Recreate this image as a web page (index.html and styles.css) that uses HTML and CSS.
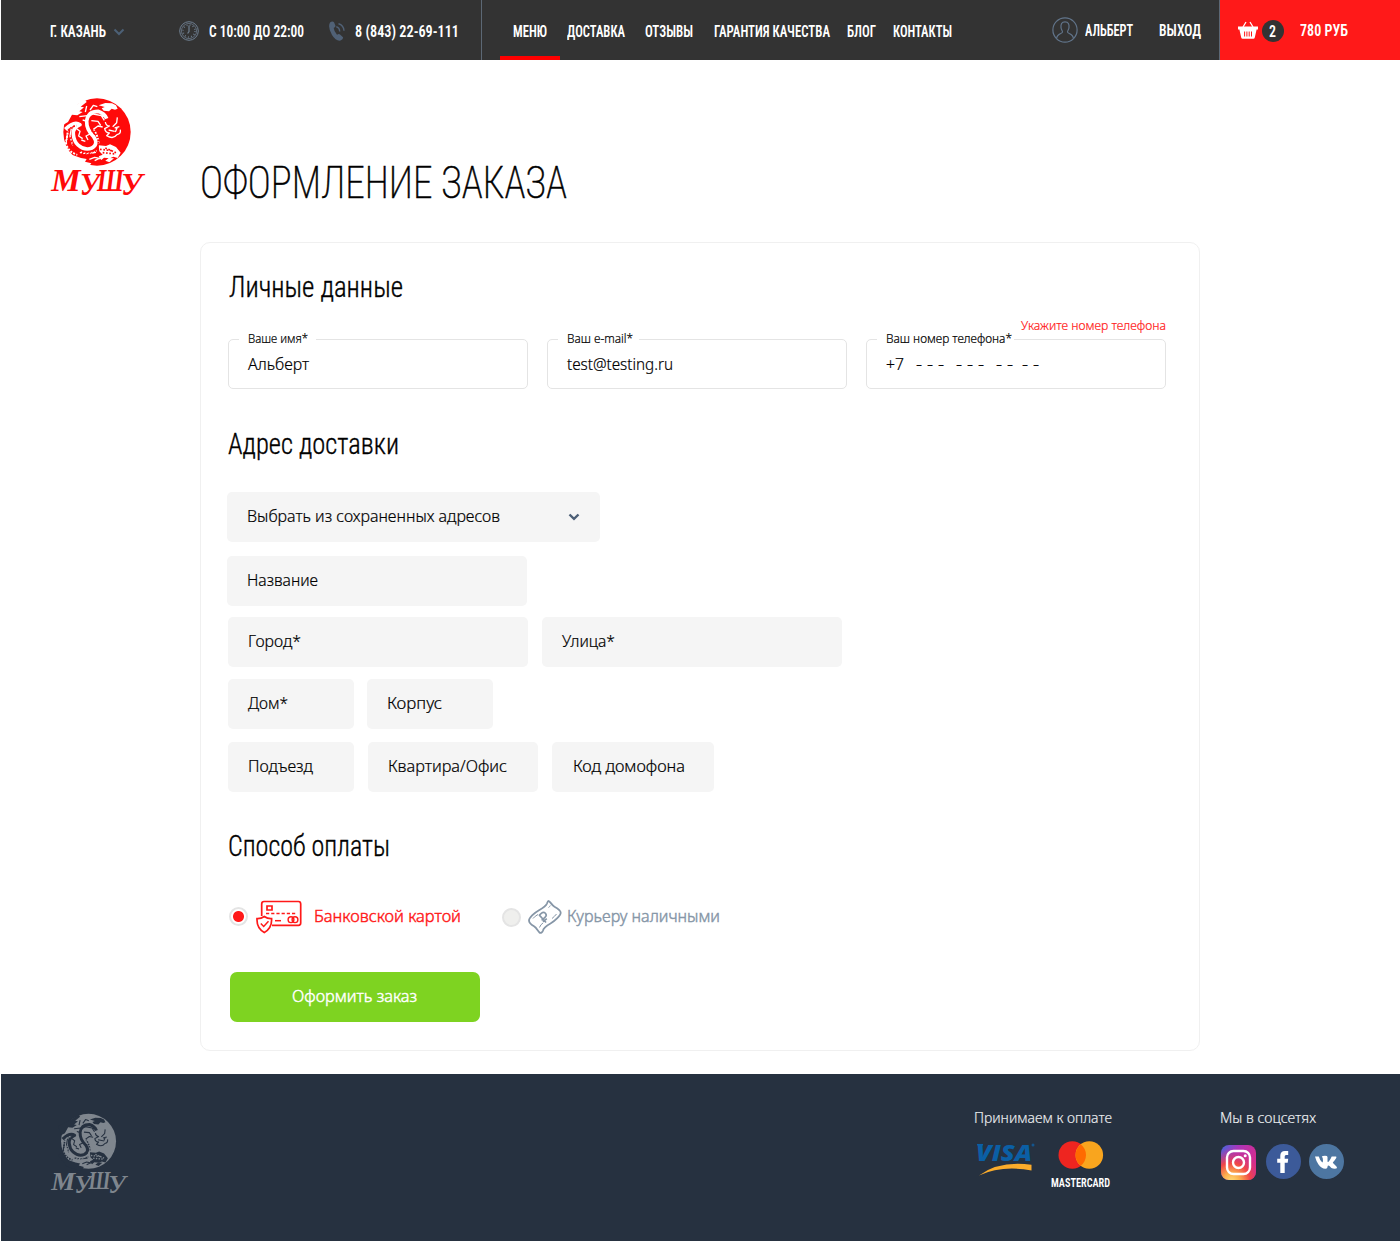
FILE: index.html
```html
<!DOCTYPE html>
<html lang="ru">
<head>
<meta charset="utf-8">
<title>Оформление заказа — Мушу</title>
<link rel="stylesheet" href="styles.css">
</head>
<body>
<svg class="sprite" aria-hidden="true">
  <symbol id="dragon" viewBox="0 0 360 345">
    <circle cx="171" cy="126" r="101" fill="currentColor"/>
    <g class="hole">
      <path d="M60 70L104 48L134 28L140 36L122 50L132 52L118 64L128 66L112 76L96 74L84 96L70 104Z"/>
      <path d="M176 46l20-7 20 1 12 6 5 10-8 3-10-3-8 8-16-2-6-7 9-4z"/>
      <path d="M176 166l22 2 12-5 18 8 14 17-9 16-13-4-10 5-18-2-8 7-8-11 12-5-10-10z"/>
      <path d="M66 170l14 4 6 17 18 6 19 7 17 3-5 8 19 5-12 16-50-18-32-40z"/>
      <path d="M196 212l10-8 16 1-14 12z"/>
    </g>
    <g class="line">
      <path d="M76 118q26-26 44-14q-22 9-20 29q2 21 14 32q20 18 42 9q20-12 5-34q-22-21-21-47q4-29 34-29q20 6 26 22" stroke-width="11"/>
      <path d="M142 80l18-8 24 5 9 14M154 92l20 2 8 12M96 104l-6 34 8 28M82 134l-4 28M118 80l24-3M128 90l14 4M160 118l14-10 14 3M150 60l10-14 12 4M136 66l4-18M110 116l10 8-4 14 12 8M150 132l-12 6 6 12M124 150l12 4" stroke-width="4"/>
      <path d="M196 96q2 12 12 12l-14 8q2 12 14 13l-8 8q20 12 31-3q12-2 10-15M218 110l12-12 2-16M224 114l14-4M206 120l18 4M226 126l6-14" stroke-width="4"/>
      <path d="M148 208l16-6 18 4M164 212l24-12M150 190l18-3" stroke-width="4"/>
      <path d="M86 108l-8 52q6 26 34 34M120 186q26 10 50-4M176 160q-2-22-14-40M170 66q16 2 20 16" stroke-width="6" stroke-dasharray="6 4"/>
    </g>
    <g class="scale">
      <path d="M84 122q12-13 26-15M92 142q0 14 14 30q22 21 52 12q22-12 16-36M84 150q2 20 18 32q22 18 54 10M150 102q2 20 18 34M180 178l36 4M188 188l40 4M196 174l32 14"/>
    </g>
  </symbol>
</svg>

<header class="topbar">
  <div class="contacts">
    <a class="city din"><span data-w="56">Г. КАЗАНЬ</span>
      <svg width="12" height="8" viewBox="0 0 12 8"><path d="M1.5 1.5L6 6L10.5 1.5" fill="none" stroke="#4c6076" stroke-width="2"/></svg></a>
    <div class="hours din">
      <svg width="20" height="20" viewBox="0 0 20 20" fill="none" stroke="#708092"><circle cx="10" cy="10" r="9.3"/><circle cx="10" cy="10" r="7.6" stroke-width=".7"/><circle cx="10" cy="10" r="6" stroke-width="1.6" stroke-dasharray=".8 2.34"/><path d="M10 4.5V10.500L8.600 12.500" stroke-width="1.2"/></svg>
      <span data-w="95">С 10:00 ДО 22:00</span></div>
    <div class="phone din">
      <svg width="17" height="20" viewBox="0 0 17 20"><path d="M1 1.500Q3.500-.5 5 1.200L6.500 4.800Q6.600 6 4.700 7Q5 10.500 8 13.800Q10 12.500 11 13.500L14 16.300Q14.500 18 11.500 19.600Q7 20.500 3 14Q-1.500 6 1 1.500Z" fill="#506176"/><path d="M7.300 5.800Q10.500 6.500 10.700 10.500M9.500 2.700Q14.600 4 15 9.800" fill="none" stroke="#506176" stroke-width="1.4"/></svg>
      <span data-w="104">8 (843) 22-69-111</span></div>
  </div>
  <nav class="nav din">
    <a class="active"><span data-w="34">МЕНЮ</span></a>
    <a><span data-w="58">ДОСТАВКА</span></a>
    <a><span data-w="48">ОТЗЫВЫ</span></a>
    <a><span data-w="116">ГАРАНТИЯ КАЧЕСТВА</span></a>
    <a><span data-w="29">БЛОГ</span></a>
    <a><span data-w="59">КОНТАКТЫ</span></a>
  </nav>
  <div class="user din">
    <svg width="26" height="26" viewBox="0 0 26 26" fill="none" stroke="#61748a" stroke-width="1.2"><circle cx="13" cy="13" r="12.100"/><path d="M13 4.800C9.500 4.800 8.700 7.500 9 10.500C9.200 12.800 10.500 13.600 10.500 15C10.300 16.700 5 16.500 4.600 21.400M13 4.800C16.500 4.800 17.300 7.500 17 10.500C16.800 12.800 15.500 13.600 15.500 15C15.700 16.700 21 16.500 21.400 21.400"/></svg>
    <span data-w="48">АЛЬБЕРТ</span>
    <a class="exit"><span data-w="42">ВЫХОД</span></a>
  </div>
  <a class="cart din">
    <svg width="20" height="18" viewBox="0 0 20 18"><path d="M5 6L8 1M15 6L12 1" stroke="#fff" stroke-width="1.300"/><path d="M0 5.500H20V8.500H18.600L16.800 16.500Q16.500 17.800 15.300 17.800H4.700Q3.500 17.800 3.200 16.500L1.400 8.500H0Z" fill="#fff"/><path d="M6.600 10.500V15.500M8.900 10.500V15.500M11.200 10.500V15.500M13.500 10.500V15.500" stroke="#ff1919" stroke-width="1"/></svg>
    <span class="count"><span data-w="7">2</span></span>
    <span class="sum" data-w="48">780 РУБ</span>
  </a>
</header>

<main class="page">
  <svg class="logo" viewBox="0 0 360 345"><use href="#dragon"/><text y="304" class="logo-word"><tspan x="34" textLength="88" lengthAdjust="spacingAndGlyphs">М</tspan><tspan x="119" dy="10" textLength="60" lengthAdjust="spacingAndGlyphs">У</tspan><tspan x="171" dy="-12" textLength="80" lengthAdjust="spacingAndGlyphs">Ш</tspan><tspan x="243" dy="12" textLength="64" lengthAdjust="spacingAndGlyphs">У</tspan></text></svg>
  <div class="content">
    <h1><span data-w="367">ОФОРМЛЕНИЕ ЗАКАЗА</span></h1>
    <form class="card">
      <h2 class="h-personal"><span data-w="174">Личные данные</span></h2>
      <div class="fields">
        <div class="field"><label><span data-w="60">Ваше имя*</span></label><span data-w="61">Альберт</span></div>
        <div class="field mail"><label><span data-w="66">Ваш e-mail*</span></label><span data-w="106">test@testing.ru</span></div>
        <div class="field tel"><label><span data-w="126">Ваш номер телефона*</span></label>
          <span class="prefix" data-w="18">+7</span><span class="mask" data-w="28">- - -</span><span class="mask" data-w="28">- - -</span><span class="mask" data-w="17">- -</span><span class="mask last" data-w="17">- -</span>
          <em><span data-w="145">Укажите номер телефона</span></em></div>
      </div>

      <h2 class="h-address"><span data-w="171">Адрес доставки</span></h2>
      <div class="row r-saved"><div class="box saved"><span data-w="253">Выбрать из сохраненных адресов</span>
        <svg width="12" height="8" viewBox="0 0 12 8"><path d="M1.500 1.500L6 5.900L10.500 1.500" fill="none" stroke="#4c5f76" stroke-width="2.400"/></svg></div></div>
      <div class="row r-name"><div class="box wide"><span data-w="71">Название</span></div></div>
      <div class="row r-street"><div class="box wide"><span data-w="53">Город*</span></div><div class="box wide"><span data-w="53">Улица*</span></div></div>
      <div class="row r-house"><div class="box small"><span data-w="40">Дом*</span></div><div class="box small"><span data-w="55">Корпус</span></div></div>
      <div class="row r-flat"><div class="box small"><span data-w="65">Подъезд</span></div><div class="box flat"><span data-w="119">Квартира/Офис</span></div><div class="box code"><span data-w="112">Код домофона</span></div></div>

      <h2 class="h-pay"><span data-w="162">Способ оплаты</span></h2>
      <div class="pay">
        <div class="option selected"><i class="radio"></i>
          <svg width="46" height="34" viewBox="0 0 46 34" fill="none" stroke="#ff1919" stroke-width="1.700"><path d="M5.700 16V4Q5.700 1.500 8 1.500H42.500Q44.700 1.500 44.700 4V23Q44.700 25.300 42.500 25.300H16"/><path d="M11 6h5v4h-5z"/><path d="M10 13.500H40" stroke-dasharray="3.200 2" stroke-width="1.500"/><path d="M19 20.700H25" stroke-width="1.500"/><circle cx="35" cy="19.700" r="2.900" stroke-width="1.400"/><circle cx="39" cy="19.700" r="2.900" stroke-width="1.400"/><path d="M8.300 16.500Q5 18.800 1 18.600Q.5 28 8.300 32.500Q16.100 28 15.600 18.600Q11.500 18.800 8.300 16.500Z"/><path d="M4.800 23.500L7.700 26.500L12.500 21.300" stroke-width="1.500"/></svg>
          <span data-w="147">Банковской картой</span></div>
        <div class="option cash"><i class="radio"></i>
          <svg width="34" height="34" viewBox="0 0 34 34" fill="none" stroke="#8696a7" stroke-width="1.800" stroke-linejoin="round"><path d="M20.500 1C22 1 23.500 5 26.500 6.800C29.500 8.500 32.700 10.500 32.700 12.700C32.700 15.500 27 21 22.500 23.500C18 26 15.500 28 15 30.500C14.500 32.500 12.500 33.500 11.500 32.500C10 31 8.500 27.800 6 26.300C3 24.500 1 22.500 1 20.500C1 18 6 13 11 10.200C15.500 7.700 18 6 19 3.500C19.500 2 19.800 1 20.500 1Z"/><path d="M-2.200 5.500V-4.500H.8a2.600 2.600 0 0 1 0 5.400H-4M-4 3H1" transform="translate(16 17) rotate(-42)" stroke-width="1.600"/><path d="M5 18.500Q7 16 10 14.500M20.500 7.500Q22 6.500 22.300 5.500M11.500 27.500Q12.500 24.500 15 23M24 18.500Q26.500 16.500 28.500 14" stroke-width="1"/></svg>
          <span data-w="153">Курьеру наличными</span></div>
      </div>
      <button type="button"><span data-w="125">Оформить заказ</span></button>
    </form>
  </div>
</main>

<footer class="footer">
  <svg class="logo-small" viewBox="0 0 360 345"><use href="#dragon"/><text y="304" class="logo-word"><tspan x="34" textLength="88" lengthAdjust="spacingAndGlyphs">М</tspan><tspan x="119" dy="10" textLength="60" lengthAdjust="spacingAndGlyphs">У</tspan><tspan x="171" dy="-12" textLength="80" lengthAdjust="spacingAndGlyphs">Ш</tspan><tspan x="243" dy="12" textLength="64" lengthAdjust="spacingAndGlyphs">У</tspan></text></svg>
  <section class="payments">
    <h3><span data-w="138">Принимаем к оплате</span></h3>
    <div class="brands">
      <svg width="62" height="36" viewBox="0 0 62 36"><text x="2" y="19.500" class="visa" textLength="56" lengthAdjust="spacingAndGlyphs">VISA</text><path d="M3 3.700H9" stroke="#0b5fa5" stroke-width="1.500"/><circle cx="59" cy="4" r="1.500" fill="#14558d"/><path d="M5 34.500Q25 19.500 57.500 23.800V29.500Q28 24 5 34.500Z" fill="#fbac2b"/></svg>
      <div class="mastercard">
        <svg width="46" height="28" viewBox="0 0 46 28"><circle cx="14.300" cy="14" r="13.800" fill="#ee2520"/><circle cx="31.300" cy="14" r="13.800" fill="#f9a51e"/><path d="M22.800 3.200a13.800 13.800 0 0 1 0 21.600a13.800 13.800 0 0 1 0-21.600" fill="#ff6a00"/></svg>
        <span data-w="59">MASTERCARD</span>
      </div>
    </div>
  </section>
  <section class="social">
    <h3><span data-w="96">Мы в соцсетях</span></h3>
    <div class="links">
      <svg class="insta" width="35" height="35" viewBox="0 0 35 35"><defs><linearGradient id="ig" x1="0" y1="0" x2="1" y2=".3"><stop offset="0" stop-color="#4168dd"/><stop offset=".45" stop-color="#a936bb"/><stop offset="1" stop-color="#d32c92"/></linearGradient><radialGradient id="ig2" cx=".3" cy="1.050" r=".98"><stop offset="0" stop-color="#ffe07a"/><stop offset=".25" stop-color="#fcb04e"/><stop offset=".55" stop-color="#f04647"/><stop offset="1" stop-color="#d32c92" stop-opacity="0"/></radialGradient></defs><rect width="35" height="35" rx="8" fill="url(#ig)"/><rect width="35" height="35" rx="8" fill="url(#ig2)"/><g fill="none" stroke="#fff" stroke-width="2.400"><rect x="6" y="6" width="23" height="23" rx="6.500"/><circle cx="17.500" cy="17.500" r="5.500"/></g><circle cx="24.200" cy="10.800" r="1.500" fill="#fff"/></svg>
      <svg width="35" height="35" viewBox="0 0 35 35"><circle cx="17.500" cy="17.500" r="17.500" fill="#3c5a99"/><path d="M14.300 29V18.800H11.200V14.700H14.300V11.800Q14.300 7 19 7H22.200V11H20Q18.700 11 18.700 12.500V14.700H22.200L21.700 18.800H18.700V29Z" fill="#fff"/></svg>
      <svg width="35" height="35" viewBox="0 0 35 35"><circle cx="17.500" cy="17.500" r="17.500" fill="#4d76a1"/><path d="M6 12.500H9.800Q11 16.700 13.300 18.500Q14 18.200 14 16.500Q14 13.500 12.800 12.500Q13.500 11.700 16 11.700Q18.500 11.700 18.500 13V17.500Q19 18.600 20 17.300Q21.700 15 22.700 12.500H27Q27.800 12.800 27.200 14Q26 16.300 23.800 18.500Q24 19.300 26 21Q28.300 23.200 28 24Q27.500 24.900 24 24.600Q22.500 24.500 20.500 22Q19.500 21 18.800 21.800Q18.300 24.500 17.500 24.600Q12.500 25.200 9.500 20.500Q7 16.800 6 12.500Z" fill="#fff"/></svg>
    </div>
  </section>
</footer>
<script src="fit.js"></script>
</body>
</html>
```
FILE: styles.css
```css
* { box-sizing: border-box; }
body {
  margin: 0;
  padding-left: 1px;
  background: #fff;
  color: #000;
  font: 300 16px/20px "Noto Sans", sans-serif;
}
h1, h2, h3 { margin: 0; font-weight: 300; }
svg { display: block; flex: none; }
.sprite { position: absolute; width: 0; height: 0; }
[data-w] { display: inline-block; flex: none; white-space: nowrap; }
.fit { display: inline-block; transform-origin: 0 50%; }

/* logo */
.hole { fill: var(--hole); }
.line { fill: none; stroke: var(--hole); stroke-linejoin: round; }
.scale { fill: none; stroke: currentColor; stroke-width: 5; stroke-dasharray: 5 5; }
.logo-word { font: italic 700 92px "Liberation Serif", serif; fill: currentColor; }
.logo { --hole: #fff; color: #ff0a0a; width: 120px; height: 115px; margin: 30px 0 0 39px; }
.logo-small { --hole: #263140; color: #7f868e; width: 98px; height: 94px; margin: 33px 0 0 41px; }

/* header */
.topbar { display: flex; height: 60px; background: #333; color: #fff; }
.din { font: 600 17px/20px "Roboto Condensed", "Roboto", sans-serif; }
.topbar [data-w] { margin-top: -2px; }
.contacts { display: flex; align-items: center; width: 481px; padding: 3px 0 0 49px; border-right: 1px solid #5c6875; }
.city, .hours, .phone { display: flex; align-items: center; }
.city svg { margin-left: 7px; }
.hours { margin-left: 54px; gap: 10px; }
.hours svg, .phone svg { margin-top: -2px; }
.phone { margin-left: 25px; gap: 9px; }
.nav { display: flex; width: 569px; padding-left: 18px; }
.nav a { display: flex; align-items: center; padding-top: 3px; margin-right: 20px; }
.nav .active { width: 60px; padding: 7px 0 0; margin-right: 7px; justify-content: center; border-bottom: 4px solid red; }
.nav a:nth-child(3) { margin-right: 21px; }
.nav a:nth-child(4) { margin-right: 17px; }
.nav a:nth-child(5) { margin-right: 17px; }
.user { display: flex; align-items: center; width: 169px; padding: 1px 0 0 1px; border-right: 1px solid #5c6875; }
.user svg { margin-top: -1px; }
.user > span { margin-left: 7px; }
.exit { margin-left: 26px; margin-top: -2px; }
.cart { display: flex; align-items: center; flex: 1; padding: 1px 0 0 18px; background: #ff1919; }
.cart > svg { margin-top: -2px; }
.count { display: flex; justify-content: center; align-items: center; width: 22px; height: 22px; margin: 1px 0 0 4px; border-radius: 50%; background: #333; }
.topbar .count [data-w] { margin: 0 1px 0 0; }
.sum { margin-left: 16px; }

/* page */
.page { display: flex; height: 1014px; }
.content { margin-left: 40px; padding-top: 98px; }
h1 { height: 84px; font: 200 45px/50px "Roboto Condensed", "Roboto", sans-serif; -webkit-text-stroke: .5px; }
h2 { height: 40px; font: 300 29px/40px "Roboto Condensed", "Roboto", sans-serif; -webkit-text-stroke: .35px; }
.card { width: 1000px; height: 809px; padding: 24px 0 0 27px; border: 1px solid #f0f0f0; border-radius: 10px; -webkit-text-stroke: .2px; }
.h-personal { padding-left: 1px; }
.fields { display: flex; gap: 19px; margin-top: 32px; }
.field { position: relative; display: flex; align-items: center; width: 300px; height: 50px; padding: 0 0 1px 19px; border: 1px solid #e4e4e4; border-radius: 5px; }
.field label { position: absolute; left: 10px; top: -11px; width: 77px; height: 18px; padding-left: 9px; background: #fff; font-size: 12px; }
.field.mail label { width: 81px; }
.field.tel label { width: 137px; }
.mask { margin-left: 12px; }
.mask.last { margin-left: 9px; }
.field em { position: absolute; right: -1px; top: -24px; color: #ff1919; font-size: 12px; font-style: normal; }
.h-address { margin-top: 35px; }
.row { display: flex; gap: 14px; }
.r-saved { margin: 28px 0 0 -1px; }
.r-name { margin: 14px 0 0 -1px; }
.r-street { margin-top: 11px; }
.r-house { margin-top: 12px; gap: 13px; }
.r-flat { margin-top: 13px; }
.box { display: flex; align-items: center; height: 50px; padding: 0 0 2px 20px; border-radius: 5px; background: #f5f5f5; }
.wide { width: 300px; }
.small { width: 126px; }
.flat { width: 170px; }
.code { width: 162px; padding-left: 21px; }
.saved { width: 373px; justify-content: space-between; padding-right: 20px; }
.saved svg { margin-top: 2px; }
.h-pay { margin-top: 34px; }
.pay { display: flex; gap: 41px; margin-top: 34px; height: 34px; }
.option { display: flex; align-items: center; -webkit-text-stroke: .45px; }
.option [data-w] { margin-top: -2px; }
.radio { width: 19px; height: 19px; border: 2px solid #e4e4e4; border-radius: 50%; background: #efefed; }
.selected { color: #ff1919; padding-left: 1px; }
.selected .radio { margin-top: -1px; background: radial-gradient(circle, #ff1919 5px, #fff 6px); }
.selected svg { margin: 0 12px 0 8px; }
.cash { color: #8696a7; }
.cash .radio { margin-top: 1px; }
.cash svg { margin: 0 5px 0 7px; }
button { display: flex; justify-content: center; align-items: center; width: 250px; height: 50px; margin: 38px 0 0 2px; padding: 0 3px 2px 0; border: 0; border-radius: 7px; background: #7ed321; color: #fff; font: 300 16px/20px "Noto Sans", sans-serif; -webkit-text-stroke: .45px; }

/* footer */
.footer { display: flex; height: 167px; background: #263140; color: #eef0f2; }
.footer h3 { height: 20px; font-size: 14px; -webkit-text-stroke: .15px; }
.payments { width: 246px; margin: 34px 0 0 834px; }
.brands { display: flex; margin-top: 13px; }
.visa { font: italic 800 23px "Open Sans", sans-serif; fill: #0b5fa5; }
.mastercard { display: flex; flex-direction: column; align-items: center; width: 60px; margin-left: 15px; font: 600 12.5px/14px "Roboto Condensed", "Roboto", sans-serif; color: #fff; }
.mastercard [data-w] { height: 14px; margin: 7px 1px 0 0; }
.mastercard .fit { display: block; width: max-content; }
.social { margin-top: 34px; }
.links { display: flex; gap: 8px; margin-top: 16px; }
.insta { margin: 1px 2px 0 1px; }
```
FILE: fit.js
```js
// Condenses each label horizontally to the column width given in data-w.
document.querySelectorAll('[data-w]').forEach(el => {
  const inner = document.createElement('span');
  inner.className = 'fit';
  inner.append(...el.childNodes);
  el.append(inner);
  const width = Number(el.dataset.w);
  const natural = inner.getBoundingClientRect().width;
  el.style.width = width + 'px';
  inner.style.transform = `scaleX(${width / natural})`;
});
```
